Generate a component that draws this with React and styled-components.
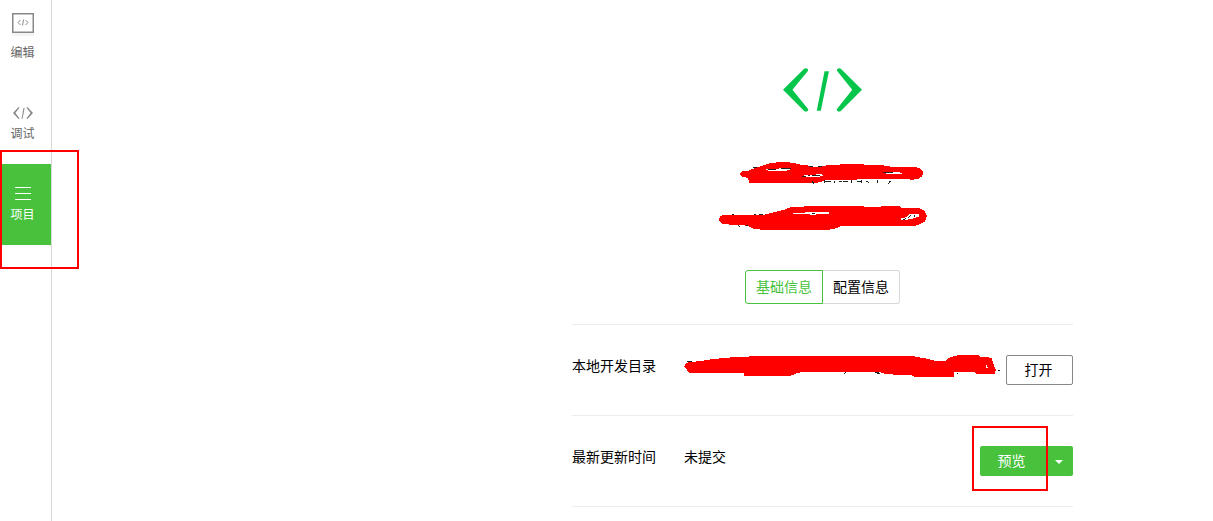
import React, { useState } from "react";
import styled, { createGlobalStyle } from "styled-components";

const GlobalStyle = createGlobalStyle`
  * {
    box-sizing: border-box;
  }
  body {
    margin: 0;
    background: #fff;
    color: #000;
    font-family: "Noto Sans CJK SC", sans-serif;
    font-size: 14px;
  }
  button {
    font: inherit;
    cursor: pointer;
  }
`;

const Page = styled.div`
  display: flex;
  min-height: 100vh;
`;

const Sidebar = styled.nav`
  display: flex;
  flex-direction: column;
  flex: none;
  width: 52px;
  padding-top: 2px;
  border-right: 1px solid #d8d8d8;
`;

const NavSlot = styled.div`
  position: relative;
`;

const NavButton = styled.button`
  display: flex;
  flex-direction: column;
  align-items: center;
  justify-content: flex-end;
  gap: 6px;
  width: 100%;
  height: 81px;
  padding: 0 6px 23px 0;
  border: 0;
  font-size: 12px;
  line-height: 16px;
  color: ${props => props.$active ? "#fff" : "#666"};
  background: ${props => props.$active ? "#48c23d" : "transparent"};
  svg {
    display: block;
  }
`;

const Marker = styled.div`
  position: absolute;
  top: ${props => props.$top};
  left: ${props => props.$left};
  width: ${props => props.$width};
  height: ${props => props.$height};
  border: 2px solid #f00;
  pointer-events: none;
`;

const Main = styled.main`
  flex: 1;
  padding-left: 380px;
`;

const Project = styled.section`
  max-width: 501px;
  margin: 0 auto;
  padding-top: 68px;
`;

const Header = styled.header`
  display: flex;
  flex-direction: column;
  align-items: center;
  padding-bottom: 20px;
`;

const HiddenName = styled.div`
  margin: 43px 0 35px;
  svg {
    display: block;
  }
`;

const Tabs = styled.div`
  display: flex;
`;

const Tab = styled.button`
  height: 34px;
  padding: 0 10px 2px;
  border: 1px solid ${props => props.$active ? "#48c23d" : "#d8d8d8"};
  color: ${props => props.$active ? "#48c23d" : "#000"};
  background: #fff;
  &:first-child {
    border-radius: 3px 0 0 3px;
  }
  &:last-child {
    border-left: 0;
    border-radius: 0 3px 3px 0;
  }
`;

const Details = styled.dl`
  margin: 0;
  border-bottom: 1px solid #ececec;
`;

const Row = styled.div`
  display: flex;
  align-items: flex-start;
  height: 91px;
  padding-top: 30px;
  border-top: 1px solid #ececec;
  line-height: 20px;
  dt {
    width: 112px;
  }
  dd {
    flex: 1;
    margin: 0;
  }
`;

const HiddenPath = styled.div`
  position: relative;
  height: 20px;
  svg {
    position: absolute;
    top: -5px;
    left: -4px;
  }
`;

const OpenButton = styled.button`
  width: 67px;
  height: 30px;
  padding: 0 2px 2px 0;
  border: 1px solid #888;
  border-radius: 2px;
  background: #fff;
`;

const SplitButton = styled.div`
  position: relative;
  display: flex;
`;

const PreviewButton = styled.button`
  width: ${props => props.$caret ? "28px" : "65px"};
  height: 30px;
  padding: ${props => props.$caret ? "0" : "0 2px 2px 0"};
  border: 0;
  border-radius: ${props => props.$caret ? "0 2px 2px 0" : "2px 0 0 2px"};
  color: #fff;
  background: #48c23d;
  svg {
    display: block;
    margin: 2px auto 0;
  }
`;

function CodeIcon({ width, height, color }) {
  return (
    <svg width={width} height={height} viewBox="42 38 234 134" preserveAspectRatio="none" fill={color} aria-hidden="true">
      <path d="M42 104 L104 41 Q108 37 114 40 Q118 43 115 48 L70 104 L115 161 Q119 166 115 169 Q108 173 104 168 Z" />
      <path d="M276 104 L214 41 Q210 37 204 40 Q200 43 203 48 L247 104 L203 161 Q199 166 203 169 Q210 173 214 168 Z" />
      <path d="M165 48 H178 L154 168 H142 Z" />
    </svg>
  );
}

function EditIcon() {
  return (
    <svg width="24" height="25" viewBox="0 0 24 25" aria-hidden="true">
      <rect x="1" y="20" width="22" height="3" fill="#f4f4f4" />
      <rect x="1.75" y="0.75" width="20.5" height="18.5" fill="#fff" stroke="#888" strokeWidth="1.5" />
      <g fill="none" stroke="#888">
        <path d="M9.5 7 L7 9.5 L9.5 12" />
        <path d="M14.5 7 L17 9.5 L14.5 12" />
        <path d="M12.5 6.5 L11.5 12.5" />
      </g>
    </svg>
  );
}

function MenuIcon() {
  return (
    <svg width="16" height="13" viewBox="0 0 16 13" fill="#fff" aria-hidden="true">
      <path d="M0 0h16v1H0z M0 6h16v1H0z M0 12h16v1H0z" />
    </svg>
  );
}

// red brush strokes over the project name and the app id
function NameScribble() {
  return (
    <svg width="231" height="80" viewBox="-9 0 693 240" shapeRendering="crispEdges" aria-hidden="true">
      <path fill="#f00" d="M90 58 L94 50 L115 47 L145 36 L175 26 L207 21 L250 23 L265 28 L297 32 L320 37 L340 32 L390 29 L396 26 L457 26 L462 29 L520 31 L548 36 L615 36 L630 40 L639 50 L637 63 L628 70 L610 74 L540 71 L510 73 L380 74 L340 77 L330 82 L305 84 L118 84 L113 68 L98 66 Z" />
      <path fill="#f00" d="M27 195 L30 185 L37 180 L163 179 L190 172 L220 165 L242 157 L280 155 L285 152 L457 152 L462 155 L568 154 L573 158 L630 160 L645 169 L651 184 L644 200 L630 208 L612 213 L393 213 L378 220 L352 225 L160 225 L130 221 L113 212 L60 209 L35 206 Z" />
      <path fill="#fff" d="M168 43 L205 43 L210 39 L243 39 L240 46 L205 48 L175 48 Z M276 62 L335 57 L339 64 L280 67 Z M519 51 L548 51 L575 53 L575 58 L530 57 Z M249 173 L325 172 L357 170 L357 178 L318 178 L310 181 L295 177 L249 177 Z M573 190 L588 187 L600 177 L627 177 L626 185 L617 188 L600 193 L575 195 Z" />
      <path fill="none" stroke="#222" strokeWidth="3" d="M130 38h12 M175 43h22 M212 40h30 M276 65h12 M293 62h7 M307 61h24 M520 53h28 M296 33h12 M325 35h12 M306 80l6 6 M342 76v8 M354 80h9 M372 77v8 M342 80h20 M386 80h9 M400 80h15 M425 76v9 M440 80h12 M453 76v8 M468 79l9 3 M503 76v8 M542 77l-6 9 M65 178h6 M133 178h6 M147 178h12 M84 211l6 4 M108 212h6 M306 176h10 M580 194l9 -4 M593 190l9 -9 M612 180v7" />
    </svg>
  );
}

function PathScribble() {
  return (
    <svg width="321" height="30" viewBox="0 0 963 90" shapeRendering="crispEdges" aria-hidden="true">
      <path fill="none" stroke="#222" strokeWidth="3" d="M20 33h15 M57 34h6 M500 65l-8 6 M585 67h12 M590 71h9 M830 68l5 4 M954 61h6" />
      <path fill="#f00" d="M12 50 L17 40 L25 37 L63 33 L93 28 L132 24 L170 21 L245 18 L695 18 L735 25 L765 32 L797 33 L807 23 L835 15 L895 15 L900 21 L935 23 L938 35 L943 50 L948 58 L945 71 L890 71 L880 65 L822 67 L822 80 L703 80 L693 75 L620 73 L600 67 L595 65 L435 65 L367 66 L350 70 L333 77 L192 77 L192 68 L27 68 L20 58 Z" />
      <path fill="#fff" d="M918 45h4v6h3v4h-7z" />
    </svg>
  );
}

const navItems = [
  { id: "edit", label: "编辑", icon: <EditIcon /> },
  { id: "debug", label: "调试", icon: <CodeIcon width={20} height={12} color="#888" /> },
  { id: "project", label: "项目", icon: <MenuIcon /> }
];

export default function App() {
  const [page, setPage] = useState("project");
  const [tab, setTab] = useState("基础信息");

  return (
    <Page>
      <GlobalStyle />
      <Sidebar>
        {navItems.map(item => (
          <NavSlot key={item.id}>
            <NavButton $active={page === item.id} onClick={() => setPage(item.id)}>
              {item.icon}
              {item.label}
            </NavButton>
            {item.id === "project" && (
              <Marker $top="-14px" $left="0" $width="79px" $height="119px" />
            )}
          </NavSlot>
        ))}
      </Sidebar>
      <Main>
        <Project>
          <Header>
            <CodeIcon width={79} height={44} color="#06c54b" />
            <HiddenName>
              <NameScribble />
            </HiddenName>
            <Tabs>
              {["基础信息", "配置信息"].map(name => (
                <Tab key={name} $active={tab === name} onClick={() => setTab(name)}>
                  {name}
                </Tab>
              ))}
            </Tabs>
          </Header>
          <Details>
            <Row>
              <dt>本地开发目录</dt>
              <dd>
                <HiddenPath>
                  <PathScribble />
                </HiddenPath>
              </dd>
              <OpenButton>打开</OpenButton>
            </Row>
            <Row>
              <dt>最新更新时间</dt>
              <dd>未提交</dd>
              <SplitButton>
                <PreviewButton>预览</PreviewButton>
                <PreviewButton $caret aria-label="更多">
                  <svg width="8" height="4" viewBox="0 0 8 4" fill="#fff">
                    <path d="M0 0h8L4 4z" />
                  </svg>
                </PreviewButton>
                <Marker $top="-20px" $left="-8px" $width="76px" $height="65px" />
              </SplitButton>
            </Row>
          </Details>
        </Project>
      </Main>
    </Page>
  );
}
